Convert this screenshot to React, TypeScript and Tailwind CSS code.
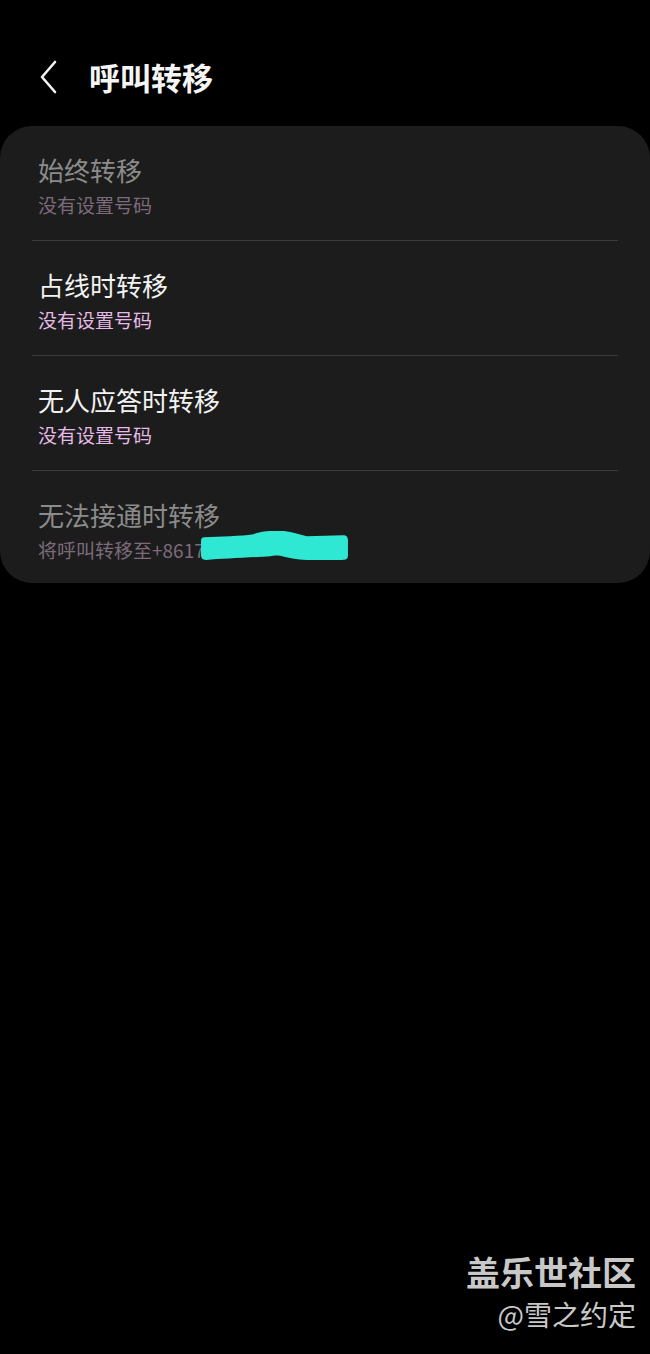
import React from 'react';

const font = { fontFamily: '"Noto Sans CJK SC", "Noto Sans", sans-serif' };

type Row = { title: string; sub: string; enabled: boolean; masked?: boolean };

// hand-drawn marker scribble covering the phone number
function Blob() {
  return (
    <svg
      className="absolute left-[162px] top-[-8px]"
      width="150"
      height="33"
      viewBox="0 0 146 32"
      preserveAspectRatio="none"
    >
      <path
        d="M4 7 C20 6 40 6 52 4 C58 2 62 1 70 1 L82 1 C90 2 96 4 104 6 C115 6 128 5 139 5 C143 5 144 7 144 10 L144 25 C144 28 142 29 138 29 L104 29 C94 29 86 27 78 25 C72 24 68 26 60 26 C40 27 20 28 6 29 C2 29 1 27 1 24 L1 11 C1 8 2 7 4 7 Z"
        fill="#2ee8d4"
      />
    </svg>
  );
}

export default function App() {
  const rows: Row[] = [
    { title: '始终转移', sub: '没有设置号码', enabled: false },
    { title: '占线时转移', sub: '没有设置号码', enabled: true },
    { title: '无人应答时转移', sub: '没有设置号码', enabled: true },
    { title: '无法接通时转移', sub: '将呼叫转移至+8617', enabled: false, masked: true },
  ];

  return (
    <div className="w-[650px] h-[1354px] bg-black flex flex-col relative" style={font}>
      {/* Header */}
      <div className="h-[126px] flex items-start pt-[57px] pl-[36px]">
        <svg width="26" height="36" viewBox="0 0 26 36" className="mt-[2px]">
          <path d="M19 3 L6 18 L19 33" stroke="#f2f2f2" strokeWidth="2.6" fill="none" strokeLinecap="round" strokeLinejoin="round" />
        </svg>
        <h1 className="ml-[27px] text-[31px] leading-[40px] font-bold text-[#f5f5f5]">呼叫转移</h1>
      </div>

      {/* Card */}
      <div className="rounded-[32px] bg-[#1c1c1c] flex flex-col">
        {rows.map((r, i) => (
          <React.Fragment key={r.title}>
            <div className={`px-[38px] pt-[29px] ${i === rows.length - 1 ? 'pb-[21px]' : 'pb-[23px]'}`}>
              <div className={`text-[26px] leading-[30px] ${r.enabled ? 'text-[#f2f2f2]' : 'text-[#8b8b8b]'}`}>
                {r.title}
              </div>
              <div className={`relative mt-[8px] text-[19px] leading-[24px] ${r.enabled ? 'text-[#e6b9e6]' : 'text-[#7d6b7b]'}`}>
                {r.sub}
                {r.masked && <Blob />}
              </div>
            </div>
            {i < rows.length - 1 && <div className="mx-[32px] h-px bg-[#3c3c3c]" />}
          </React.Fragment>
        ))}
      </div>

      {/* Watermark */}
      <div className="absolute right-[14px] bottom-[22px] flex flex-col items-end">
        <div className="text-[34px] leading-[40px] font-bold text-[#c8c8c8]">盖乐世社区</div>
        <div className="text-[28px] leading-[36px] text-[#c8c8c8] mt-[4px]">@雪之约定</div>
      </div>
    </div>
  );
}
